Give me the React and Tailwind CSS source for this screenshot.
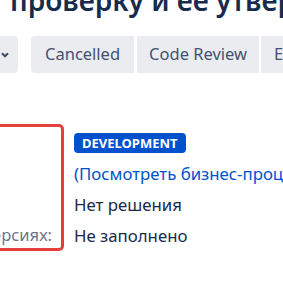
const labels = ["Статус:", "Резолюция:", "Решение:", "Исправить в версиях:"];

const App = () => {
  return (
    <div
      className="w-[283px] h-[283px] overflow-hidden bg-white text-[#172B4D]"
      style={{ fontFamily: '"Noto Sans", "Open Sans", sans-serif' }}
    >
      <div className="h-[36px] -mt-[16px] pl-[10px] whitespace-nowrap text-[28px] font-semibold leading-[32px] text-[#172B4D]">
        проверку и ее утвердить
      </div>

      <div className="flex h-[37px] mt-[16px] whitespace-nowrap text-[16.5px] text-[#42526E]">
        <div className="w-[18px] shrink-0 h-full bg-[#EBECF0] rounded-r-[4px] flex items-center pl-[1px]">
          <svg width="8" height="6" viewBox="0 0 8 6">
            <path d="M1 1.2 L4 4.2 L7 1.2" fill="none" stroke="#42526E" strokeWidth="2.2" />
          </svg>
        </div>
        <div className="ml-[13px] shrink-0 h-full bg-[#EBECF0] rounded-l-[4px] px-[14px] flex items-center">
          Cancelled
        </div>
        <div className="ml-[3px] shrink-0 h-full bg-[#EBECF0] px-[12px] flex items-center">
          Code Review
        </div>
        <div className="ml-[2px] shrink-0 h-full bg-[#EBECF0] px-[13px] flex items-center">
          Escalate
        </div>
      </div>

      <div className="flex mt-[51px] -ml-[196px]">
        <div className="w-[260px] h-[127px] shrink-0 border-[3px] border-[#E53E3E] rounded-[5px] overflow-hidden flex justify-end pr-[9px]">
          <div className="w-max text-[16.5px] text-[#6B778C] whitespace-nowrap">
            {labels.map((l) => (
              <div key={l} className="h-[31px] flex items-center">
                {l}
              </div>
            ))}
          </div>
        </div>
        <div className="ml-[10px] shrink-0 pt-[3px] whitespace-nowrap text-[16.8px]">
          <div className="h-[31px] flex items-center">
            <span className="bg-[#0052CC] text-white font-bold text-[13px] leading-[20px] h-[20px] px-[8px] rounded-[4px]">
              DEVELOPMENT
            </span>
          </div>
          <div className="h-[31px] flex items-center text-[#0052CC]">
            (Посмотреть бизнес-процесс)
          </div>
          <div className="h-[31px] flex items-center">Нет решения</div>
          <div className="h-[31px] flex items-center">Не заполнено</div>
        </div>
      </div>
    </div>
  );
};

export default App;
